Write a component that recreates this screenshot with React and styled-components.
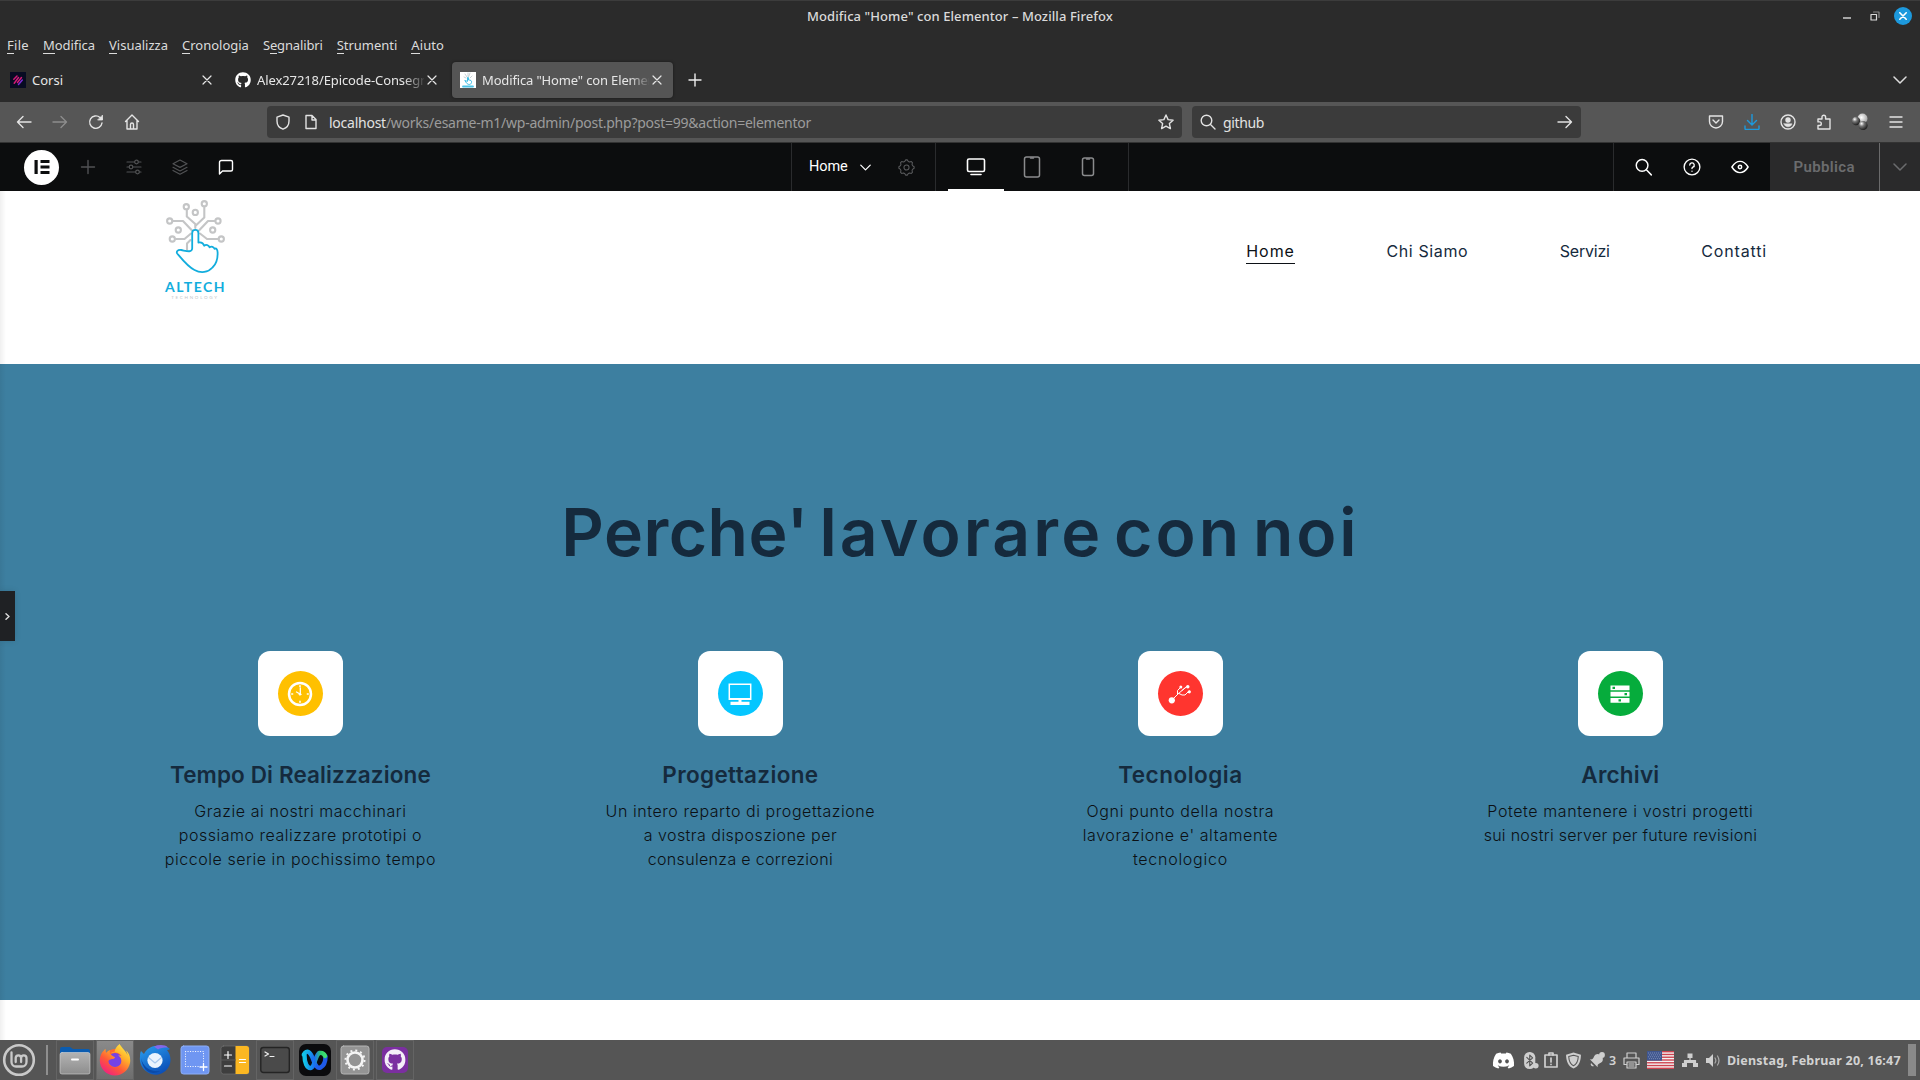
import React from "react";
import styled, { createGlobalStyle, css } from "styled-components";
import { FaGithub, FaDiscord, FaFirefoxBrowser } from "react-icons/fa";

const ui = `"Noto Sans", "Open Sans", sans-serif`;
const site = `Inter, "Open Sans", sans-serif`;

const GlobalStyle = createGlobalStyle`
  *, *::before, *::after { box-sizing: border-box; }
  body { margin: 0; background: #fff; font-family: ${ui}; overflow: hidden; }
  svg { display: block; flex: none; }
`;

const Screen = styled.div`
  width: 1920px;
  height: 1080px;
  display: flex;
  flex-direction: column;
  overflow: hidden;
`;

const Text = styled.span`
  display: block;
  white-space: nowrap;
  letter-spacing: ${(p) => p.$track || 0}px;
`;

const Svg = styled.svg.attrs((p) => ({
  width: p.$w || p.$s || 16,
  height: p.$h || p.$s || 16,
  fill: p.fill || "none",
}))`
  stroke-linecap: round;
  stroke-linejoin: round;
`;

const Line = ({ s = 16, sw = 1.4, color = "currentColor", children, box = 16 }) => (
  <Svg $s={s} viewBox={`0 0 ${box} ${box}`} stroke={color} strokeWidth={sw}>
    {children}
  </Svg>
);

/* ---------- window chrome ---------- */

const TitleBar = styled.header`
  height: 32px;
  flex: none;
  background: #2b2b2b;
  border-top: 1px solid #3c3c3c;
  padding-bottom: 2px;
  display: grid;
  grid-template-columns: 1fr auto 1fr;
  align-items: center;
  color: #dadada;
  font-size: 13px;
  font-weight: 500;
`;

const WindowButtons = styled.div`
  display: flex;
  justify-content: flex-end;
  align-items: center;
  padding-right: 8px;
  gap: 10px;
`;

const WinButton = styled.span`
  width: 18px;
  height: 18px;
  border-radius: 50%;
  display: flex;
  align-items: center;
  justify-content: center;
  background: ${(p) => (p.$close ? "#1d99dd" : "transparent")};
`;

const MenuBar = styled.nav`
  height: 27px;
  flex: none;
  background: #2b2b2b;
  display: flex;
  align-items: center;
  padding: 0 0 2px 7px;
  gap: 14px;
  font-size: 13px;
  color: #dcdcdc;
`;

const Mnemonic = styled.span`
  border-bottom: 1px solid currentColor;
  display: inline-block;
  line-height: 15px;
`;

const TabStrip = styled.div`
  height: 43px;
  flex: none;
  background: #2b2b2b;
  display: flex;
  align-items: center;
  padding: 0 0 1px 2px;
`;

const Tab = styled.div`
  width: 221px;
  height: 36px;
  margin-right: 4px;
  padding: 0 8px;
  border-radius: 4px;
  display: flex;
  align-items: center;
  color: #e6e6e6;
  font-size: 13px;
  ${(p) =>
    p.$active &&
    css`
      background: #555;
      box-shadow: 0 0 3px rgba(0, 0, 0, 0.45);
    `}
`;

const TabTitle = styled.div`
  flex: 1;
  margin-left: 6px;
  overflow: hidden;
  ${(p) => p.$fade && css`mask-image: linear-gradient(to right, #000 88%, rgba(0, 0, 0, 0.1));`}
`;

const Slot = styled.div`
  width: ${(p) => p.$w || 36}px;
  height: 100%;
  display: flex;
  align-items: center;
  justify-content: center;
  color: ${(p) => p.$color || "inherit"};
`;

const NavBar = styled.div`
  height: 41px;
  flex: none;
  background: #565656;
  border-bottom: 1px solid #333;
  display: flex;
  align-items: center;
  padding: 0 6px;
  color: #e4e4e4;
`;

const Field = styled.div`
  width: ${(p) => p.$w}px;
  height: 32px;
  border-radius: 4px;
  background: #3b3b3b;
  display: flex;
  align-items: center;
  font-size: 14px;
  color: #e2e2e2;
  margin-left: ${(p) => p.$ml}px;
`;

const Address = styled(Text)`
  margin-left: 5px;
`;

const Dim = styled.span`
  color: #9c9c9c;
`;

const Push = styled.div`
  margin-left: auto;
  height: 100%;
  display: flex;
`;

/* ---------- editor bar ---------- */

const EditorBar = styled.div`
  height: 48px;
  flex: none;
  background: #0c0d0e;
  display: flex;
  color: #fff;
  font-family: Roboto, sans-serif;
`;

const EditorGroup = styled.div`
  width: ${(p) => p.$w}px;
  height: 48px;
  padding-left: ${(p) => p.$pl || 0}px;
  border-left: ${(p) => (p.$line ? "1px solid #2a2b2d" : "0")};
  display: flex;
  align-items: center;
`;

const ElementorMark = styled.div`
  width: 35px;
  height: 35px;
  margin-right: 5.5px;
  border-radius: 50%;
  background: #fff;
  display: flex;
  align-items: center;
  justify-content: center;
`;

const PageName = styled.div`
  font-size: 14.5px;
  margin-top: -2px;
  width: 38px;
`;

const Device = styled.div`
  width: 56px;
  height: 48px;
  display: flex;
  align-items: center;
  justify-content: center;
  color: ${(p) => (p.$active ? "#fff" : "#8a8b8d")};
  border-bottom: 2px solid ${(p) => (p.$active ? "#fff" : "transparent")};
  padding-top: 2px;
`;

const Publish = styled.div`
  width: 110px;
  height: 48px;
  background: #2a2a2b;
  border-right: 1px solid #6a6a6b;
  display: flex;
  align-items: center;
  padding-left: 23.5px;
  color: #6b6c6e;
  font-weight: 600;
  font-size: 15px;
`;

const PublishMore = styled.div`
  width: 40px;
  background: #2a2a2b;
  color: #6b6c6e;
  display: flex;
  align-items: center;
  justify-content: center;
`;

/* ---------- site preview ---------- */

const Preview = styled.main`
  position: relative;
  height: 849px;
  flex: none;
  background: #fff;
  font-family: ${site};
`;

const LeftShade = styled.div`
  position: absolute;
  inset: 0 auto 0 0;
  width: 6px;
  background: linear-gradient(to right, rgba(0, 0, 0, 0.06), transparent);
`;

const PanelHandle = styled.button`
  position: absolute;
  left: 0;
  top: 400px;
  width: 15px;
  height: 50px;
  padding: 0;
  border: 0;
  background: #1f2124;
  color: #e0e0e0;
  display: flex;
  align-items: center;
  justify-content: center;
  box-shadow: 0 0 6px rgba(0, 0, 0, 0.12);
`;

const SiteHeader = styled.header`
  height: 173px;
  display: flex;
  justify-content: space-between;
  padding: 0 153px 0 160px;
`;

const SiteNav = styled.nav`
  display: flex;
  gap: 91.5px;
  padding-top: 46px;
  height: 73px;
`;

const SiteLink = styled.a`
  height: 27px;
  line-height: 28px;
  font-size: 16px;
  color: ${(p) => (p.$active ? "#0c1116" : "#152a3d")};
  border-bottom: 1px solid ${(p) => (p.$active ? "#0c1116" : "transparent")};
`;

const Why = styled.section`
  height: 636px;
  background: #3d7fa0;
  padding: 128px 79.6px 0 80.4px;
`;

const WhyTitle = styled.h1`
  margin: 0;
  height: 80px;
  line-height: 80px;
  font-size: 66px;
  font-weight: 600;
  color: #152a3d;
  text-align: center;
  white-space: nowrap;
  word-spacing: -6px;
`;

const Word = styled.span`
  letter-spacing: ${(p) => p.$track}px;
`;

const Cards = styled.div`
  margin-top: 79px;
  display: grid;
  grid-template-columns: repeat(4, 1fr);
`;

const Card = styled.article`
  display: flex;
  flex-direction: column;
  align-items: center;
`;

const CardIcon = styled.div`
  width: 85px;
  height: 85px;
  border-radius: 12px;
  background: #fff;
  display: flex;
  align-items: center;
  justify-content: center;
`;

const Disc = styled.div`
  width: 45px;
  height: 45px;
  border-radius: 50%;
  background: ${(p) => p.$bg};
  display: flex;
  align-items: center;
  justify-content: center;
`;

const CardTitle = styled.h2`
  margin: 25px 0 9.5px;
  line-height: 28px;
  font-size: 22.5px;
  font-weight: 600;
  color: #152a3d;
`;

const CardLine = styled(Text)`
  line-height: 24px;
  font-size: 16px;
  font-weight: 300;
  color: #0c1014;
`;

/* ---------- taskbar ---------- */

const TaskBar = styled.footer`
  height: 40px;
  flex: none;
  background: #555;
  display: flex;
  align-items: center;
  color: #d2d2d2;
`;

const Separator = styled.div`
  width: 2px;
  height: 30px;
  background: #8f8f8f;
  margin: 0 7px 0 8px;
`;

const TaskButton = styled.div`
  width: 38px;
  height: 40px;
  margin-left: ${(p) => (p.$first ? 1 : 2)}px;
  display: flex;
  align-items: center;
  justify-content: center;
  border: 1px solid ${(p) => (p.$open ? "#646464" : "transparent")};
  background: ${(p) => (p.$focus ? "linear-gradient(#8a8a8a,#6e6e6e)" : "transparent")};
`;

const Count = styled(Text)`
  font-size: 12.5px;
  font-weight: 600;
`;

const Clock = styled.div`
  width: 174px;
  margin-left: 4px;
  font-weight: 700;
  font-size: 12.5px;
`;

const ShowDesktop = styled.div`
  width: 8px;
  height: 32px;
  background: #8a8a8a;
  margin: 0 4px 0 7px;
`;

/* ---------- drawings ---------- */

const CloseX = () => (
  <Line s={10} box={10} sw={1.2}>
    <path d="M1 1l8 8M9 1l-8 8" />
  </Line>
);

const Chevron = ({ s = 14, sw = 1.5 }) => (
  <Line s={s} sw={sw} box={14}>
    <path d="M1 4l6 6 6-6" />
  </Line>
);

const LogoDrawing = () => (
  <Svg $w={70} $h={89} viewBox="0 0 70 89">
    <g stroke="#c4c5c6" strokeWidth="2.1">
      <path d="M35.3 37V33l-8.500-7.500v-6.500M35.300 35l9-8.500V16" />
      <path d="M32 39.500L23 30H13M31 42.500l-6.500 5.500H16M39 39.500L48 30h7M40 42.500l7 5.500h11M30.500 49l-3.500 3.500V59" />
      <circle cx="26.3" cy="15.7" r="2.6" fill="#fff" />
      <circle cx="44.3" cy="12.7" r="2.6" fill="#fff" />
      <circle cx="9.7" cy="30" r="2.6" fill="#fff" />
      <circle cx="12.3" cy="48" r="2.6" fill="#fff" />
      <circle cx="58" cy="30" r="2.6" fill="#fff" />
      <circle cx="61.3" cy="48" r="2.6" fill="#fff" />
      <circle cx="35.3" cy="21.4" r="2.6" />
      <circle cx="18.3" cy="39" r="2.6" />
      <circle cx="52.7" cy="39" r="2.6" />
    </g>
    <path
      d="M32.200 57.500V42a3.100 3.100 0 0 1 6.200 0v9.500c2.500-.6 4.800.4 5.800 3.200 1.800-1.500 4.500-.8 5.300 1.600 2-1.300 4.300-.6 5 1.500 2-1 3 1 3.100 3.500.3 7-1.500 12-5.100 15.200-4.500 5-11.500 6-18 2.500C28 76 23 69.500 17.200 62.500c-1.200-2 .5-4 4-3.500 5 .9 10.500 3 11-1.500z"
      fill="#fff"
      stroke="#12addd"
      strokeWidth="1.8"
    />
  </Svg>
);

const Brand = styled.div`
  width: 70px;
  height: 120px;
  display: flex;
  flex-direction: column;
  align-items: center;
`;

const BrandName = styled(Text)`
  font-family: Lato, sans-serif;
  font-size: 14px;
  line-height: 13px;
  color: #12addd;
  font-weight: 700;
  padding-left: 1px;
`;

const BrandSub = styled(Text)`
  font-family: Lato, sans-serif;
  font-size: 4.5px;
  line-height: 7px;
  margin-top: 1px;
  color: #c3c6c8;
`;

const Favicon = () => (
  <Svg $s={16} viewBox="0 0 16 16">
    <path d="M0 0h16v16H0z" fill="#fff" />
    <path d="M5 2l2 3M10 1L8.500 5M4 5l2 1M12 4l-2 2M8 1v3" stroke="#b9c6cc" strokeWidth=".8" />
    <path d="M7.500 9V5.500c.6-.7 1 0 1 .5v2c2 0 3.500.5 3 2.500-.5 2.500-3.500 2.500-5 .5L5 8.800z" stroke="#2bb7e2" strokeWidth=".9" />
    <path d="M3 14.500h10" stroke="#4cc2e6" strokeWidth="1.8" />
  </Svg>
);

const EpicodeIcon = () => (
  <Svg $s={16} viewBox="0 0 16 16">
    <path d="M0 0h16v16H0z" fill="#070b22" />
    <path d="M3.800 7.200l3.200-3.200M4.200 11.200l4.300-5.700M7.500 10.500l4-5" stroke="#d11a78" strokeWidth="1.5" />
    <path d="M8.500 12.500l3.800-4.500" stroke="#7a2bd0" strokeWidth="1.5" />
  </Svg>
);

const Gear = ({ s, color, r = 3, sw = 1.2, n = 8 }) => (
  <Line s={s} box={20} sw={sw} color={color}>
    <path
      d={
        Array.from({ length: n * 4 }, (_, i) => {
          const rad = i % 4 < 2 ? 9 : 7.4;
          const a = ((i - 0.5) / (n * 4)) * Math.PI * 2;
          return `${i ? "L" : "M"}${(10 + rad * Math.cos(a)).toFixed(2)} ${(10 + rad * Math.sin(a)).toFixed(2)}`;
        }).join("") + "z"
      }
    />
    <circle cx="10" cy="10" r={r} />
  </Line>
);

const ClockDrawing = () => (
  <Svg $s={26} viewBox="0 0 26 26" stroke="#fff">
    <circle cx="13" cy="13" r="11" strokeWidth="2.5" />
    <path d="M13.300 7V13M13 13l-3.500-2" strokeWidth="1.3" />
    <path d="M13 4.800v.8M13 20.400v.8M4.800 13h.8M20.400 13h.8" strokeWidth="1.6" />
    <circle cx="13" cy="13.3" r=".9" fill="#fff" />
  </Svg>
);

const MonitorDrawing = () => (
  <Svg $s={26} viewBox="0 0 26 26">
    <path d="M2.300 3.300h21.400v15h-21.400z" stroke="#fff" strokeWidth="1.5" strokeLinejoin="miter" />
    <path d="M2 17h22v2H2zM11.500 18h3v3h-3zM3.500 20.800h19v3.200h-19z" fill="#fff" />
  </Svg>
);

const NetworkDrawing = () => (
  <Svg $s={26} viewBox="0 0 26 26" stroke="#fff" strokeWidth="1">
    <path d="M5 19l6-6 8-7M10.500 13.500v-4l3-3M12 12.500l3 1.500h3l4-4M15 9.500l5-4" />
    <g fill="#fff" stroke="none">
      <circle cx="4.8" cy="19.3" r="3.1" />
      <circle cx="13.8" cy="6" r="1.5" />
      <circle cx="20.8" cy="5.8" r="1.7" />
      <circle cx="22.3" cy="10.8" r="1.6" />
    </g>
  </Svg>
);

const ServerDrawing = () => (
  <Svg $s={22} viewBox="0 0 22 22">
    <path d="M1.500 2.500h19v4.800h-19zM1.500 8.700h19v4.800h-19zM1.500 14.900h19v4.800h-19z" fill="#fff" />
    <path d="M3.500 3.800h2.500v2.200H3.500zM15.500 10h2.500v2.200h-2.500zM9.500 16.200h2.500v2.200H9.500z" fill="#06ac3c" />
  </Svg>
);

const MintDrawing = () => (
  <Svg $s={34} viewBox="0 0 34 34" stroke="#c9c9c9">
    <circle cx="17" cy="17" r="14.8" strokeWidth="2.6" />
    <path d="M9.500 9.500v9.500a4.500 4.500 0 0 0 4.500 4.500h6a4.500 4.500 0 0 0 4.500-4.500v-4a2.700 2.700 0 0 0-5.400 0v4M19.100 15a2.700 2.700 0 0 0-5.400 0v4" strokeWidth="2.3" />
  </Svg>
);

const FolderDrawing = () => (
  <Svg $s={32} viewBox="0 0 32 32">
    <defs>
      <linearGradient id="folder" x2="0" y2="1"><stop stopColor="#b3b3b3" /><stop offset="1" stopColor="#8d8d8d" /></linearGradient>
    </defs>
    <path d="M1 5a2 2 0 0 1 2-2h8l3 2h15a2 2 0 0 1 2 2v8H1z" fill="#0b5cb0" />
    <rect x="1" y="8.5" width="30" height="21.5" rx="2" fill="url(#folder)" stroke="#d5d5d5" strokeWidth=".6" />
    <path d="M13 15.500h6" stroke="#fff" strokeWidth="2" />
  </Svg>
);

const FirefoxDrawing = () => (
  <Svg $s={32} viewBox="0 0 32 32">
    <defs>
      <linearGradient id="ffx" x1=".9" y1="0" x2=".2" y2="1">
        <stop stopColor="#fff44f" /><stop offset=".35" stopColor="#ffb02a" /><stop offset=".65" stopColor="#ff5a36" /><stop offset="1" stopColor="#f0198a" />
      </linearGradient>
    </defs>
    <circle cx="16" cy="17" r="12" fill="#ff6a2c" />
    <circle cx="16" cy="16" r="7" fill="#7542e5" />
    <FaFirefoxBrowser x="0" y="0" size={32} fill="url(#ffx)" stroke="none" />
  </Svg>
);

const ThunderbirdDrawing = () => (
  <Svg $s={32} viewBox="0 0 32 32">
    <defs>
      <linearGradient id="tbd" x2=".6" y2="1"><stop stopColor="#2aa0f0" /><stop offset="1" stopColor="#0c50b8" /></linearGradient>
    </defs>
    <path d="M2 7l3 3C8 4 14 1 21 2c5 0 8 1 10 3-1 .6-2 1-3 1 4 5 5 12 1 18-4 6-11 8-17 6C4 27 0 20 1 13c0-2 0-4 1-6z" fill="url(#tbd)" />
    <path d="M15 2.500c5-2 11-2 14 1-5 0-8 .5-10 2z" fill="#8468e8" />
    <circle cx="16" cy="16.5" r="7.6" fill="#eaf4fe" />
    <path d="M9.500 13.500l6.500 5.500 6.500-5.500" stroke="#a8c9ee" strokeWidth="1.2" />
    <path d="M2 14c2 9 9 14 19 13-6 4-17 3-19-13z" fill="#0b4aa8" />
  </Svg>
);

const ShotDrawing = () => (
  <Svg $s={30} viewBox="0 0 30 30">
    <rect x="1" y="1" width="28" height="28" rx="2.5" fill="#6f96f2" stroke="#8eaff8" />
    <path d="M5.500 6.500h18v14M5.500 6.500v15h15" stroke="#fff" strokeWidth="1.2" strokeDasharray="0.1 2.4" />
    <path d="M23.500 18.500v7M20 22h7" stroke="#fff" strokeWidth="1.3" />
  </Svg>
);

const CalcDrawing = () => (
  <Svg $s={30} viewBox="0 0 30 30">
    <rect x="1" y="1" width="28" height="28" rx="2.5" fill="#3e3e3e" stroke="#777" strokeWidth=".6" />
    <path d="M15.500 1H26.500a2.500 2.500 0 0 1 2.500 2.500v23a2.500 2.500 0 0 1-2.500 2.500h-11z" fill="#fbb722" />
    <path d="M1 15h14.500" stroke="#5a5a5a" />
    <path d="M4.500 10h7M8 6.500v7M4.500 21h7M19.500 14.500h6M19.500 17.500h6" stroke="#fff" strokeWidth="1.2" />
  </Svg>
);

const TerminalDrawing = () => (
  <Svg $s={30} viewBox="0 0 30 30">
    <rect x=".8" y="2.5" width="28.5" height="25" rx="2.5" fill="#4a4a4a" stroke="#242424" strokeWidth="1.4" />
    <path d="M5 7l3.500 2L5 11M10 11.500h4" stroke="#f0f0f0" strokeWidth="1.2" />
  </Svg>
);

const WebexDrawing = () => (
  <Svg $s={32} viewBox="0 0 32 32">
    <defs>
      <linearGradient id="wbx" x2="1" y2=".6"><stop stopColor="#12c5e8" /><stop offset=".5" stopColor="#1a6df0" /><stop offset="1" stopColor="#1f5ae8" /></linearGradient>
      <linearGradient id="wbg" x2="1"><stop stopColor="#12c5e8" /><stop offset=".5" stopColor="#1a6df0" /><stop offset=".8" stopColor="#2dcf6a" /><stop offset="1" stopColor="#3fe070" /></linearGradient>
    </defs>
    <rect width="32" height="32" rx="7" fill="#0b0b0d" />
    <path d="M4.800 10.500C8 5 11.500 8 14 15s4.500 10 7.500 8.500 5-6 5-11" stroke="url(#wbx)" strokeWidth="4.4" />
    <path d="M5.500 11c0 8 2.500 13 6 13 4 0 5-14 9-15 2.500-.5 4.500.5 5.500 3" stroke="url(#wbg)" strokeWidth="4.4" />
  </Svg>
);

const SettingsDrawing = () => (
  <Svg $s={30} viewBox="0 0 30 30">
    <rect x="1" y="1" width="28" height="28" rx="2.5" fill="#949494" stroke="#b5b5b5" />
    <circle cx="15" cy="15" r="7.5" stroke="#f5f5f5" strokeWidth="2.6" />
    <circle cx="15" cy="15" r="9.5" stroke="#f5f5f5" strokeWidth="2" strokeDasharray="2 2.974" strokeLinecap="butt" />
  </Svg>
);

const GithubDesktopDrawing = () => (
  <Svg $s={28} viewBox="0 0 28 28">
    <rect x="1" y="1" width="26" height="26" rx="5" fill="#7b2fa0" />
    <FaGithub x="3.2" y="3" size={21.6} fill="#f4eef8" stroke="none" />
  </Svg>
);

const FlagDrawing = () => (
  <Svg $w={27} $h={18} viewBox="0 0 27 18">
    <path d="M0 0h27v18H0z" fill="#f3f3f3" />
    {[0, 1, 2, 3, 4, 5, 6].map((i) => (
      <path key={i} d={`M0 ${i * 2.77}h27v1.385H0z`} fill="#cf4350" />
    ))}
    <path d="M0 0h15v9.700H0z" fill="#3f568f" />
    <path d="M1.500 2h12M2.500 3.900h11M1.500 5.800h12M2.500 7.700h11" stroke="#9dabc9" strokeWidth=".7" strokeDasharray=".2 1.8" />
  </Svg>
);

const BallsDrawing = () => (
  <Svg $s={18} viewBox="0 0 18 18">
    <defs>
      <radialGradient id="ball" cx=".35" cy=".3" r=".8"><stop stopColor="#fff" /><stop offset=".35" stopColor="#777" /><stop offset="1" stopColor="#0a0a0a" /></radialGradient>
      <radialGradient id="ballw" cx=".4" cy=".4" r=".8"><stop stopColor="#fff" /><stop offset="1" stopColor="#8a8a8a" /></radialGradient>
    </defs>
    <circle cx="11.5" cy="5.5" r="5" fill="url(#ballw)" />
    <circle cx="5" cy="8" r="4.3" fill="url(#ball)" />
    <circle cx="12" cy="12.5" r="4.6" fill="url(#ball)" />
  </Svg>
);

/* ---------- data ---------- */

const menus = [
  ["", "F", "ile", 0.3], ["", "M", "odifica", -0.05], ["", "V", "isualizza", 0],
  ["", "C", "ronologia", 0], ["S", "e", "gnalibri", -0.14], ["", "S", "trumenti", -0.03], ["", "A", "iuto", 0.1],
];

const links = [["Home", 0.95], ["Chi Siamo", 0.62], ["Servizi", -0.2], ["Contatti", 0.84]];

const headline = [["Perche'", 0.5], ["lavorare", 3.1], ["con", 3.1], ["noi", 2.9]];

const cards = [
  { title: "Tempo Di Realizzazione", track: 0.12, bg: "#ffc000", art: <ClockDrawing />,
    lines: [["Grazie ai nostri macchinari", 0.55], ["possiamo realizzare prototipi o", 0.51], ["piccole serie in pochissimo tempo", 0.54]] },
  { title: "Progettazione", track: 0.35, bg: "#05c6ff", art: <MonitorDrawing />,
    lines: [["Un intero reparto di progettazione", 0.57], ["a vostra disposzione per", 0.47], ["consulenza e correzioni", 0.33]] },
  { title: "Tecnologia", track: 0.5, bg: "#ff352f", art: <NetworkDrawing />,
    lines: [["Ogni punto della nostra", 0.66], ["lavorazione e' altamente", 0.58], ["tecnologico", 0.75]] },
  { title: "Archivi", track: 0.2, bg: "#06ac3c", art: <ServerDrawing />,
    lines: [["Potete mantenere i vostri progetti", 0.6], ["sui nostri server per future revisioni", 0.28]] },
];

export default function App() {
  return (
    <Screen>
      <GlobalStyle />
      <TitleBar>
        <span />
        <Text $track={0.08}>Modifica "Home" con Elementor – Mozilla Firefox</Text>
        <WindowButtons>
          <WinButton><Line s={10} box={10}><path d="M1 7h8" strokeLinecap="butt" /></Line></WinButton>
          <WinButton><Line s={10} box={10} sw={1.2}><path d="M1 3.500h5.500V9H1z" /><path d="M3.500 1H9v5.500" stroke="#8a8a8a" /></Line></WinButton>
          <WinButton $close><Line s={8} box={10} sw={2} color="#fff"><path d="M1 1l8 8M9 1l-8 8" /></Line></WinButton>
        </WindowButtons>
      </TitleBar>
      <MenuBar>
        {menus.map(([a, u, b, t]) => (
          <Text key={u + b} $track={t}>{a}<Mnemonic>{u}</Mnemonic>{b}</Text>
        ))}
      </MenuBar>
      <TabStrip>
        <Tab>
          <EpicodeIcon />
          <TabTitle><Text>Corsi</Text></TabTitle>
          <Slot $w={16}><CloseX /></Slot>
        </Tab>
        <Tab>
          <FaGithub size={16} color="#fff" />
          <TabTitle $fade><Text $track={-0.1}>Alex27218/Epicode-Consegne</Text></TabTitle>
          <Slot $w={16}><CloseX /></Slot>
        </Tab>
        <Tab $active>
          <Favicon />
          <TabTitle $fade><Text $track={-0.15}>Modifica "Home" con Elementor</Text></TabTitle>
          <Slot $w={16}><CloseX /></Slot>
        </Tab>
        <Slot $w={35}><Line s={14} box={14} color="#eee"><path d="M7 1v12M1 7h12" /></Line></Slot>
        <Push><Slot $w={40} $color="#ddd"><Chevron /></Slot></Push>
      </TabStrip>
      <NavBar>
        <Slot><Line><path d="M15 8H1.500M7 2.500L1.500 8 7 13.500" /></Line></Slot>
        <Slot $color="#8d8d8d"><Line><path d="M1 8h13.500M9 2.500L14.500 8 9 13.500" /></Line></Slot>
        <Slot><Line><path d="M14 9a6.200 6.200 0 1 1-2-5.500l2 1.500" /><path d="M14.500 1.500v4.500H10z" fill="currentColor" strokeWidth=".8" /></Line></Slot>
        <Slot $w={35}><Line><path d="M1.500 7.500L8 1l6.500 6.500M3 6.500V15h10V6.500M6.500 15v-4.500a1.500 1.500 0 0 1 3 0V15" /></Line></Slot>
        <Field $w={915} $ml={118}>
          <Slot $w={31}><Line><path d="M8 1l6 2.200V7c0 4-2.500 7-6 8.200C4.500 14 2 11 2 7V3.200z" /></Line></Slot>
          <Slot $w={26}><Line><path d="M3 1.500h6l4 4v9H3zM9 1.500V6h4" /></Line></Slot>
          <Address $track={-0.25}>localhost<Dim>/works/esame-m1/wp-admin/post.php?post=99&amp;action=elementor</Dim></Address>
          <Push><Slot $w={32}><Line><path d="M8 1l2.100 4.600 5 .6-3.700 3.400 1 5L8 12.100l-4.400 2.500 1-5L.9 6.200l5-.6z" /></Line></Slot></Push>
        </Field>
        <Field $w={389} $ml={10}>
          <Slot $w={31}><Line><circle cx="6.5" cy="6.5" r="5.3" /><path d="M10.500 10.500L15 15" /></Line></Slot>
          <Text $track={-0.35}>github</Text>
          <Push><Slot $w={32}><Line><path d="M1 8h13.500M9 2.500L14.500 8 9 13.500" /></Line></Slot></Push>
        </Field>
        <Push>
          <Slot><Line><path d="M1.500 2h13v5.500a6.500 6.500 0 0 1-13 0zM5 6l3 3 3-3" /></Line></Slot>
          <Slot $color="#1d99dd"><Line><path d="M8 .5v10M3.500 6.500L8 11l4.500-4.500M1 12v2.500a1 1 0 0 0 1 1h12a1 1 0 0 0 1-1V12" /></Line></Slot>
          <Slot><Line><circle cx="8" cy="8" r="7" /><circle cx="8" cy="6" r="2" fill="currentColor" /><path d="M4 9.800h8c-.5 2-2 3-4 3s-3.500-1-4-3z" fill="currentColor" strokeWidth=".5" /></Line></Slot>
          <Slot><Line><path d="M2 15V11.500h1.500a1.800 1.800 0 0 0 0-3.600H2V5h4V3a1.800 1.800 0 0 1 3.600 0v2H14v10z" /></Line></Slot>
          <Slot><BallsDrawing /></Slot>
          <Slot><Line><path d="M2 3h12M2 8h12M2 13h12" /></Line></Slot>
        </Push>
      </NavBar>

      <EditorBar>
        <EditorGroup $w={791} $pl={24}>
          <ElementorMark>
            <Svg $s={16} viewBox="0 0 16 16"><path d="M.5 1h3.200v14H.5zM6.500 1h9v2.900h-9zM6.500 6.500h9v2.900h-9zM6.500 12.100h9V15h-9z" fill="#0c0d0e" /></Svg>
          </ElementorMark>
          <Slot $w={46} $color="#515254"><Line><path d="M8 1.500v13M1.500 8h13" /></Line></Slot>
          <Slot $w={46.3} $color="#515254"><Line sw={1.2}><path d="M1 3h7.500M12.500 3H15M1 8h2M7 8h8M1 13h8.500M13.500 13H15" /><circle cx="10.5" cy="3" r="1.8" /><circle cx="5" cy="8" r="1.8" /><circle cx="11.5" cy="13" r="1.8" /></Line></Slot>
          <Slot $w={46.3} $color="#515254"><Line sw={1.2}><path d="M8 1l7 3.700-7 3.700-7-3.700zM1 8.300L8 12l7-3.700M1 11.500L8 15.200l7-3.700" /></Line></Slot>
          <Slot $w={45}><Line><path d="M1.500 15V3.500a2 2 0 0 1 2-2h9.500a1.500 1.500 0 0 1 1.500 1.500v7.500a1.500 1.500 0 0 1-1.500 1.500H4.500z" /></Line></Slot>
        </EditorGroup>
        <EditorGroup $w={144} $pl={17} $line>
          <PageName><Text $track={-0.1}>Home</Text></PageName>
          <Slot $w={36}><Chevron s={11} sw={1.6} /></Slot>
          <Slot $w={46} $color="#5a5b5d"><Gear s={17} /></Slot>
        </EditorGroup>
        <EditorGroup $w={193} $pl={12} $line>
          <Device $active><Svg $s={20} viewBox="0 0 20 20" stroke="currentColor" strokeWidth="1.6"><rect x="1.5" y="2" width="17" height="12.5" rx="1.5" /><path d="M5 17.500h10" /></Svg></Device>
          <Device><Svg $w={18} $h={22} viewBox="0 0 18 22" stroke="currentColor" strokeWidth="1.5"><rect x="1.5" y="1" width="15" height="20" rx="2" /><path d="M7.500 2h3" /></Svg></Device>
          <Device><Svg $w={14} $h={20} viewBox="0 0 14 20" stroke="currentColor" strokeWidth="1.5"><rect x="1.5" y="1" width="11" height="17.5" rx="2" /><path d="M5.500 2h3" /></Svg></Device>
        </EditorGroup>
        <EditorGroup $w={485} $line />
        <EditorGroup $w={157} $pl={6} $line>
          <Slot $w={48}><Line s={18} sw={1.3}><circle cx="6.3" cy="6.5" r="5.2" /><path d="M10.100 10.500L14.500 15" /></Line></Slot>
          <Slot $w={48}><Line s={18} sw={1.2}><circle cx="8" cy="8" r="7" /><path d="M6 6.300a2 2 0 1 1 2.800 1.900c-.6.300-.8.600-.8 1.200M8 11.700v.1" /></Line></Slot>
          <Slot $w={48}><Line s={18} sw={1.3}><path d="M.8 8C3 4.500 5.400 3 8 3s5 1.500 7.200 5C13 11.500 10.600 13 8 13S3 11.500.8 8z" /><circle cx="8" cy="8" r="1.5" /></Line></Slot>
        </EditorGroup>
        <Publish><Text $track={0.35}>Pubblica</Text></Publish>
        <PublishMore><Chevron s={14} /></PublishMore>
      </EditorBar>

      <Preview>
        <SiteHeader>
          <Brand>
            <LogoDrawing />
            <BrandName $track={1.5}>ALTECH</BrandName>
            <BrandSub $track={1.7}>TECHNOLOGY</BrandSub>
          </Brand>
          <SiteNav>
            {links.map(([l, t], i) => (
              <SiteLink key={l} $active={i === 0}><Text $track={t}>{l}</Text></SiteLink>
            ))}
          </SiteNav>
        </SiteHeader>
        <Why>
          <WhyTitle>
            {headline.map(([word, t], i) => (
              <React.Fragment key={word}>
                {i > 0 && " "}
                <Word $track={t}>{word}</Word>
              </React.Fragment>
            ))}
          </WhyTitle>
          <Cards>
            {cards.map((c) => (
              <Card key={c.title}>
                <CardIcon><Disc $bg={c.bg}>{c.art}</Disc></CardIcon>
                <CardTitle><Text $track={c.track}>{c.title}</Text></CardTitle>
                {c.lines.map(([l, t]) => <CardLine key={l} $track={t}>{l}</CardLine>)}
              </Card>
            ))}
          </Cards>
        </Why>
        <LeftShade />
        <PanelHandle><Line s={7} box={7} sw={1.4}><path d="M2 .8l3 2.700-3 2.700" /></Line></PanelHandle>
      </Preview>

      <TaskBar>
        <Slot $w={38}><MintDrawing /></Slot>
        <Separator />
        <TaskButton $first $open><FolderDrawing /></TaskButton>
        <TaskButton $open $focus><FirefoxDrawing /></TaskButton>
        <TaskButton><ThunderbirdDrawing /></TaskButton>
        <TaskButton><ShotDrawing /></TaskButton>
        <TaskButton><CalcDrawing /></TaskButton>
        <TaskButton $open><TerminalDrawing /></TaskButton>
        <TaskButton><WebexDrawing /></TaskButton>
        <TaskButton $open><SettingsDrawing /></TaskButton>
        <TaskButton $open><GithubDesktopDrawing /></TaskButton>
        <Push>
          <Slot $w={30} $color="#fff"><FaDiscord size={23} /></Slot>
          <Slot $w={24}><Svg $s={17} viewBox="0 0 16 16"><rect x="2" y="0" width="10.5" height="16" rx="5" fill="#cfcfcf" /><path d="M4.500 5l5.500 5.500-2.700 2.500v-10L10 5.500l-5.500 5" stroke="#555" strokeWidth="1.1" /><circle cx="13" cy="13" r="2.6" fill="#cfcfcf" /></Svg></Slot>
          <Slot $w={18}><Svg $s={16} viewBox="0 0 16 16" stroke="#cfcfcf" strokeWidth="1.7"><path d="M2 3h12v12H2z" /><path d="M6 3V1h4v2M8 6v4M8 12.300v.1" /></Svg></Slot>
          <Slot $w={26}><Svg $s={17} viewBox="0 0 16 16"><path d="M8 .5l7 2c0 6-2 11-7 13-5-2-7-7-7-13z" fill="#cfcfcf" /><path d="M8 3l4.500 1.300C12.300 8.500 11 11.500 8 13 5 11.500 3.700 8.500 3.500 4.300z" stroke="#555" /></Svg></Slot>
          <Slot $w={21}><Svg $s={16} viewBox="0 0 16 16" fill="#cfcfcf"><path d="M.8 7.300C4 7.800 4.200 6 5.200 4.200 6.500 2 9 1.500 11 2.800l2.200 2.200c1.300 2 .8 4.500-1.400 5.800-1.800 1-3.600 1.200-3.100 4.400z" /><circle cx="13" cy="3" r="2.9" /><path d="M2 11l3 3a2.200 2.200 0 0 1-3-3z" /></Svg></Slot>
          <Slot $w={11}><Count>3</Count></Slot>
          <Slot $w={26}><Svg $s={17} viewBox="0 0 17 17" stroke="#cfcfcf" strokeWidth="1.2"><path d="M4 6V1h9v5M3.500 12.500H1V6h15v6.500h-2.500" /><path d="M4 10h9v6H4zM6 12h5M6 14h5" /></Svg></Slot>
          <Slot $w={33}><FlagDrawing /></Slot>
          <Slot $w={26}><Svg $s={16} viewBox="0 0 16 16" fill="#cfcfcf"><path d="M5.500 1.500h5V6h-5zM0 11h5v4H0zM11 11h5v4h-5z" /><path d="M8 6v2.500M2.500 11V8.500h11V11" stroke="#cfcfcf" strokeWidth="1.2" /></Svg></Slot>
          <Slot $w={20}><Svg $s={15} viewBox="0 0 15 15"><path d="M0 5h3l4-4v13l-4-4H0z" fill="#cfcfcf" /><path d="M9 5c1 1.500 1 3.500 0 5M11.500 3c2 3 2 6 0 9" stroke="#aaa" strokeWidth="1.2" /></Svg></Slot>
        </Push>
        <Clock><Text $track={0.22}>Dienstag, Februar 20, 16:47</Text></Clock>
        <ShowDesktop />
      </TaskBar>
    </Screen>
  );
}
